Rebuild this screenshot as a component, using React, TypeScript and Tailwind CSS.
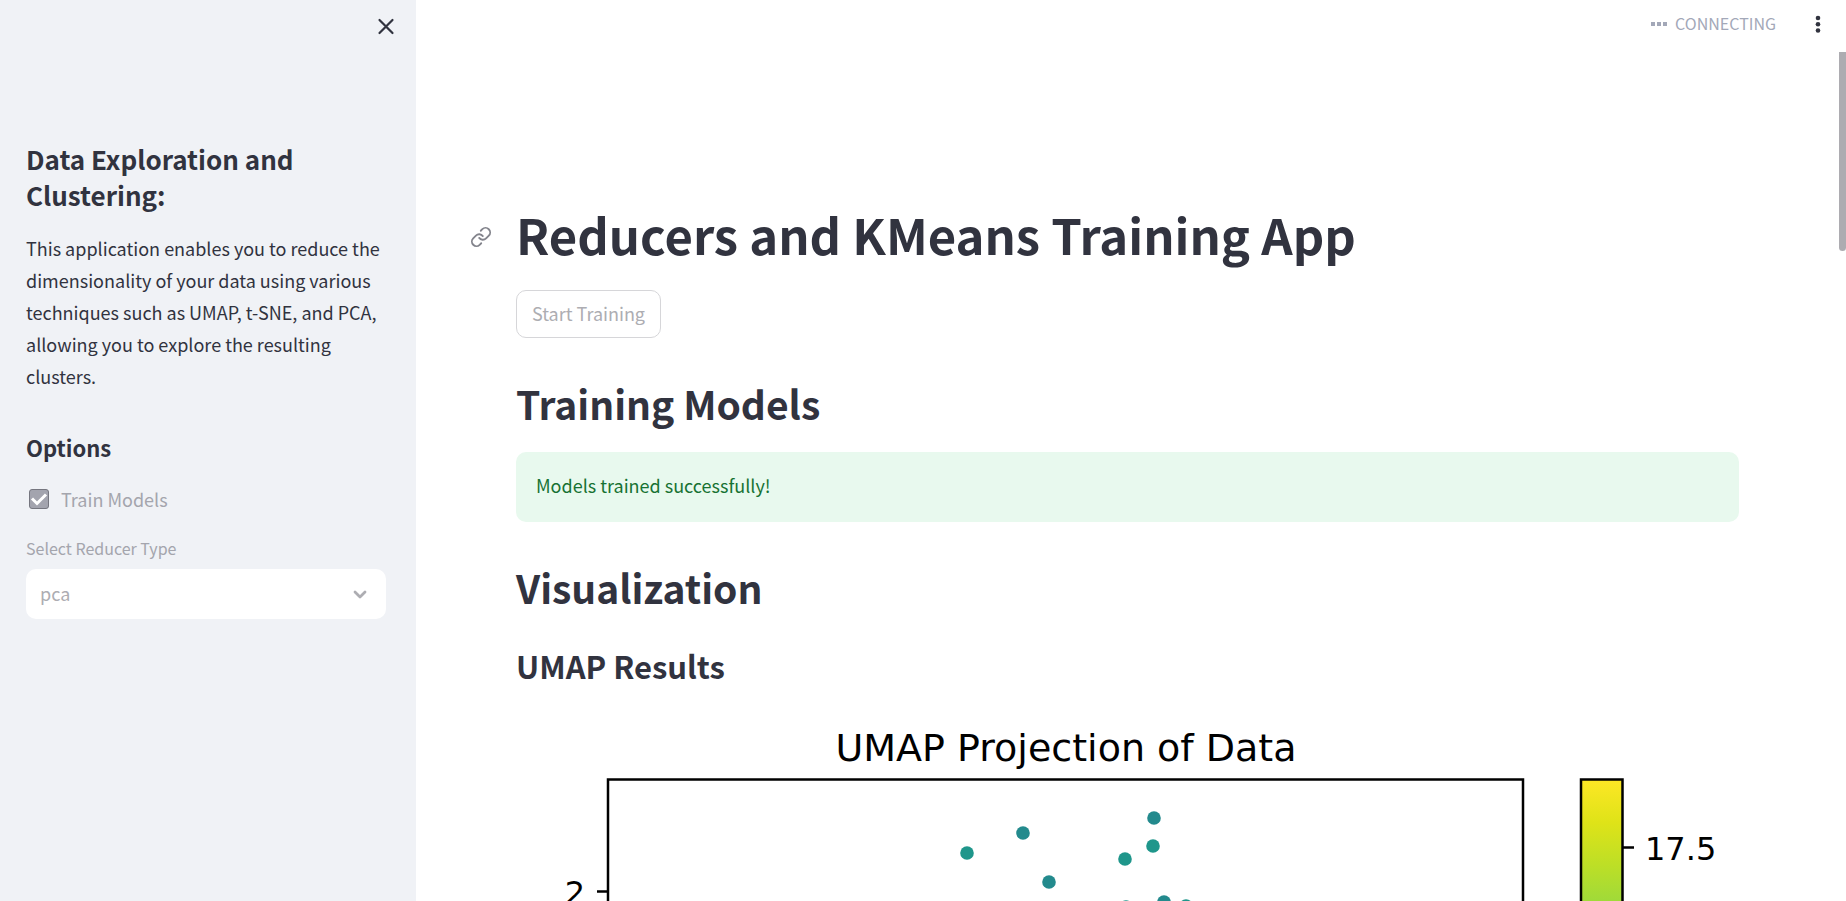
import React from "react";

const points = [
  { x: 451, y: 143, fill: "#1f968b" },
  { x: 507, y: 123, fill: "#238a8d" },
  { x: 533, y: 172, fill: "#238a8d" },
  { x: 638, y: 108, fill: "#238a8d" },
  { x: 637, y: 136, fill: "#1f968b" },
  { x: 609, y: 149, fill: "#1f968b" },
  { x: 610, y: 197, fill: "#1f968b" },
  { x: 648, y: 192, fill: "#238a8d" },
  { x: 670, y: 196, fill: "#1f968b" },
];

function UmapChart() {
  return (
    <svg viewBox="0 0 1223 940" className="block w-full" role="img" aria-label="UMAP Projection of Data">
      <defs>
        <linearGradient id="viridis" x1="0" y1="0" x2="0" y2="1">
          <stop offset="0" stopColor="#fde725" />
          <stop offset="0.05" stopColor="#dfe318" />
          <stop offset="0.1" stopColor="#bddf26" />
          <stop offset="0.15" stopColor="#9bd93c" />
          <stop offset="0.25" stopColor="#5ec962" />
          <stop offset="0.5" stopColor="#21918c" />
          <stop offset="0.75" stopColor="#3b528b" />
          <stop offset="1" stopColor="#440154" />
        </linearGradient>
      </defs>
      <g className="font-['DejaVu_Sans']" fill="#000">
        <text x="550" y="51" fontSize="38" textAnchor="middle">UMAP Projection of Data</text>
        <text x="69" y="194" fontSize="32" textAnchor="end">2</text>
        <text x="1129" y="150" fontSize="32">17.5</text>
      </g>
      {points.map((p) => (
        <circle key={`${p.x}-${p.y}`} cx={p.x} cy={p.y} r="6.8" fill={p.fill} />
      ))}
      <g fill="none" stroke="#000" strokeWidth="2.5">
        <rect x="92" y="69.5" width="915" height="852" />
        <path d="M81 181.5h11M1106.5 137.5h11.5" />
        <rect x="1065" y="69.5" width="41.5" height="852" fill="url(#viridis)" />
      </g>
    </svg>
  );
}

function Sidebar() {
  return (
    <aside className="flex w-[416px] shrink-0 flex-col bg-[#f0f2f6] pr-[30px] pl-[26px]">
      <div className="flex h-[52px] items-center justify-end">
        <button type="button" aria-label="Close sidebar" className="-mr-3 flex size-6 items-center justify-center">
          <svg viewBox="0 0 24 24" className="size-6" fill="none" stroke="currentColor" strokeWidth="2.2" strokeLinecap="round">
            <path d="M5.5 6l13 13M18.5 6l-13 13" />
          </svg>
        </button>
      </div>
      <h2 className="mt-[89px] text-[26px] leading-9 font-bold">Data Exploration and Clustering:</h2>
      <p className="mt-[19px] text-lg leading-8">
        This application enables you to reduce the dimensionality of your data using various techniques such as UMAP, t-SNE, and PCA, allowing you to explore the resulting clusters.
      </p>
      <h3 className="mt-10 text-[22px] leading-[30px] font-bold">Options</h3>
      <label className="mt-[21px] flex items-center gap-3 pl-[3px] text-lg leading-8 text-[#a4a5ad]">
        <span className="grid size-5 place-items-center">
          <input type="checkbox" defaultChecked disabled className="col-start-1 row-start-1 size-5 appearance-none rounded-[3px] border border-[#75767f] bg-[#a3a4ae]" />
          <svg viewBox="0 0 20 20" className="col-start-1 row-start-1 size-5" fill="none" stroke="#fff" strokeWidth="3">
            <path d="M3 9.5l5 5 9-9" />
          </svg>
        </span>
        Train Models
      </label>
      <label htmlFor="reducer" className="mt-5 text-base leading-[26px] text-[#a4a5ad]">Select Reducer Type</label>
      <div className="mt-2 grid items-center">
        <select id="reducer" disabled defaultValue="pca" className="col-start-1 row-start-1 h-[50px] appearance-none rounded-[10px] bg-white px-[14px] pb-0.5 text-lg text-[#adadb2] opacity-100">
          <option value="pca">pca</option>
        </select>
        <svg viewBox="0 0 16 16" className="col-start-1 row-start-1 mr-[18px] size-4 justify-self-end" fill="none" stroke="#adadb2" strokeWidth="2.8" strokeLinecap="round" strokeLinejoin="round">
          <path d="M3 6l5 5 5-5" />
        </svg>
      </div>
    </aside>
  );
}

export default function App() {
  return (
    <div className="flex h-screen overflow-hidden bg-white font-['Noto_Sans_CJK_SC',sans-serif] text-[#31333f]">
      <Sidebar />
      <div className="relative flex min-w-0 flex-1 flex-col">
        <header className="flex h-[52px] shrink-0 items-center justify-end pr-4 pb-1">
          <svg viewBox="0 0 16 4" className="mr-2 h-1 w-4" fill="#a3a8b8">
            <path d="M0 0h4v4H0zM6 0h4v4H6zM12 0h4v4h-4z" />
          </svg>
          <span className="pb-0.5 text-base leading-6 text-[#a3a8b8]">CONNECTING</span>
          <button type="button" aria-label="Main menu" className="ml-[30px] flex size-6 items-center justify-center">
            <svg viewBox="0 0 24 24" className="size-6" fill="currentColor">
              <circle cx="12" cy="6" r="2.3" />
              <circle cx="12" cy="12.3" r="2.3" />
              <circle cx="12" cy="18.5" r="2.3" />
            </svg>
          </button>
        </header>
        <main className="min-h-0 flex-1 overflow-hidden pr-[107px] pl-[100px]">
          <div className="mt-[149px] -ml-[46px] flex items-center gap-6">
            <a href="#reducers" aria-label="Link to heading" className="pt-1.5 text-[#83848c]">
              <svg viewBox="0 0 24 24" className="size-[22px]" fill="none" stroke="currentColor" strokeWidth="2" strokeLinecap="round" strokeLinejoin="round">
                <path d="M10 13a5 5 0 0 0 7.54.54l3-3a5 5 0 0 0-7.07-7.07l-1.72 1.71" />
                <path d="M14 11a5 5 0 0 0-7.54-.54l-3 3a5 5 0 0 0 7.07 7.07l1.71-1.71" />
              </svg>
            </a>
            <h1 id="reducers" className="text-[49px] leading-[66px] font-bold">Reducers and KMeans Training App</h1>
          </div>
          <button type="button" disabled className="mt-[23px] block h-12 rounded-[10px] border border-[#d6d6d9] px-[15px] pb-0.5 text-lg text-[#adadb2]">Start Training</button>
          <h2 className="mt-[38px] text-[39px] leading-[54px] font-bold">Training Models</h2>
          <div role="alert" className="mt-[22px] rounded-[10px] bg-[#e8f9ee] px-5 pt-[17px] pb-[21px] text-lg leading-8 text-[#177233]">Models trained successfully!</div>
          <h2 className="mt-[38px] text-[39px] leading-[54px] font-bold">Visualization</h2>
          <h3 className="mt-[31px] text-[31px] leading-[42px] font-bold">UMAP Results</h3>
          <div className="mt-[23px]">
            <UmapChart />
          </div>
        </main>
        <div className="absolute top-[52px] right-0 h-[199px] w-[7px] rounded-b-full bg-[#adacb1]" />
      </div>
    </div>
  );
}
